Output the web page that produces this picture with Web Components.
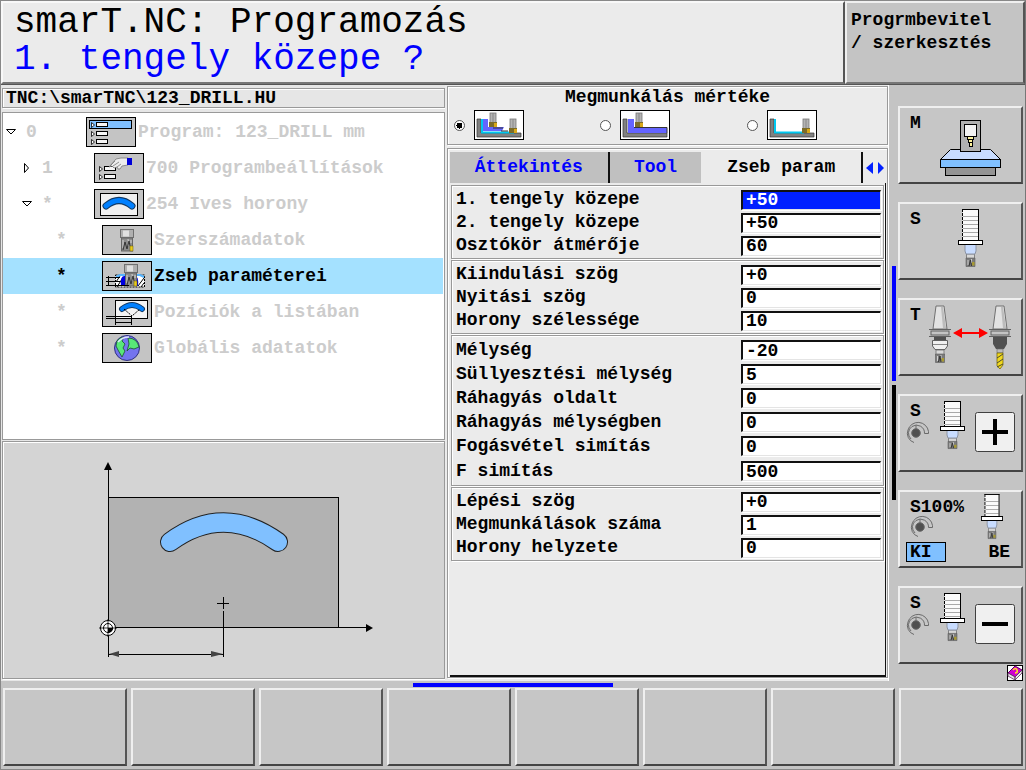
<!DOCTYPE html>
<html lang="hu">
<head>
<meta charset="utf-8">
<meta name="viewport" content="width=device-width, initial-scale=1">
<title>smarT.NC: Programozás</title>
<style>
  html, body { margin: 0; }
  body {
    background: #c4c4c4;
    color: #000;
    font: bold 18px/23px "Liberation Mono", monospace;
  }
</style>
</head>
<body>
<nc-app></nc-app>

<script>
/* Base: every element renders its markup and styles into an open shadow root. */
class NcElement extends HTMLElement {
  connectedCallback() {
    if (this.shadowRoot) return;
    const t = document.createElement('template');
    t.innerHTML = '<style>:host,*{box-sizing:border-box}' + this.css() + '</style>' + this.html();
    this.attachShadow({ mode: 'open' }).append(t.content.cloneNode(true));
  }
  css() { return ''; }
  html() { return '<slot></slot>'; }
  at(name) { return this.getAttribute(name) || ''; }
}

/* ---------- shared drawings ---------- */
const cutter = (x, y, w, h) => `<g transform="translate(${x} ${y}) scale(${w / 8} ${h / 13})">
  <rect x="0" y="0" width="8" height="5" fill="#d8d8d8" stroke="#707070" stroke-width=".8"/>
  <path d="M-.5 4H8.5V12.5H-.5Z" fill="#7c7c7c" stroke="#5a5a5a" stroke-width=".6"/>
  <path d="M1.5 6V11M5 5V9" stroke="#d0d0d0"/><path d="M2.5 12L4 6L5 12" stroke="#333" fill="none"/><rect x="5.6" y="8" width="2.4" height="3.5" fill="#a89a30"/></g>`;

const spindle = (x, y, w, body) => {
  const k = w / 25;
  let lines = '';
  for (let i = 7; i < body - 1; i += 4) lines += `<path d="M5 ${i + .5}H20" stroke="#a8a8a8"/>`;
  const t = body + 4, th = body > 28 ? 10 : 8, ch = body > 28 ? 13 : 11;
  return `<g transform="translate(${x} ${y}) scale(${k} 1)">
    <rect x="4.5" y=".5" width="16" height="${body}" fill="#fafafa"/>${lines}
    <path d="M4 .5H21M20.5 0V${body}" stroke="#000" fill="none"/>
    <path d="M4.5 0V${body}" stroke="#000" stroke-dasharray="3 1"/>
    ${cutter(8.5, t + th, 8, ch)}
    <path d="M7 ${t}H18V${t + th - 3}L17 ${t + th}H8L7 ${t + th - 3}Z" fill="#c8dcff" stroke="#8c94a4"/>
    <rect x=".5" y="${body + .5}" width="24" height="4" fill="#fff" stroke="#000"/></g>`;
};

const knob = (x, y) => `<g transform="translate(${x} ${y})" fill="none" stroke="#6a6a6a">
  <path d="M2 9A10.5 10.5 0 0 1 22.500 10.500V12.500H18.500A8 8 0 0 0 6 5.500"/>
  <path d="M2 9A9.500 9.500 0 0 0 8 21.500M6 5.500A8 8 0 0 0 5 18"/>
  <circle cx="10" cy="12" r="4.300" fill="#505050"/><path d="M10 4V8"/></g>`;

const padKey = (x, y, plus) => `<rect x="${x + .5}" y="${y + .5}" width="39" height="39" rx="2" fill="#f0f0f0" stroke="#404040"/>
  <path d="M${x + 7} ${y + 20}H${x + 33}${plus ? `M${x + 20} ${y + 7}V${y + 33}` : ''}" stroke="#000" stroke-width="4"/>`;

const holder = (x, y, dark) => `<g transform="translate(${x} ${y})">
  <path d="M7 0H15L18 23H4Z" fill="#e2e2e2" stroke="#707070"/>
  <path d="M12 1L14 22H17L14 1Z" fill="#bcbcbc"/>
  <path d="M0 23.5H22M0 30.5H22" stroke="#606060"/><rect x="2" y="25" width="18" height="4" fill="#c4c4c4" stroke="#606060"/>
  ${dark ? `<path d="M4 31H18V38L15 43H7L4 38Z" fill="#505050"/><rect x="8" y="43" width="6" height="4" fill="#bbb" stroke="#666" stroke-width=".6"/>
    <path d="M8 47H14V59L11 63L8 60Z" fill="#f0d820" stroke="#6b5b00" stroke-width=".7"/><path d="M8 52L14 48M8 57L14 53M8 61L14 58" stroke="#4a4a30"/>`
  : `<rect x="5" y="31" width="12" height="3" fill="#505050"/><path d="M3.5 34.5H18.5V40L16 43.5H6L3.5 40Z" fill="#f0f0f0" stroke="#606060"/><path d="M4 38.5H18" stroke="#888"/>
    ${cutter(7, 44, 8, 13)}`}</g>`;

/* Softkey pictures, drawn on a 120 x 74 field. */
const KEY_ART = {
  machine: `<g stroke="#000"><rect x="45.5" y="59.5" width="50" height="8" fill="#949494"/>
    <path d="M40.5 51.5L50.5 41.5H90.5L100.5 51.5Z" fill="#c8dcff"/>
    <rect x="40.5" y="51.5" width="60" height="8" fill="#80c0ff"/>
    <rect x="60.5" y="12.5" width="20" height="31" fill="#b0b0b0"/>
    <rect x="64.5" y="16.5" width="12" height="12" fill="#f2f2f2"/>
    <rect x="67.5" y="28.5" width="6" height="3" fill="#fff49c"/><rect x="68.5" y="31.5" width="4" height="3" fill="#fff49c"/><rect x="69.5" y="34.5" width="3" height="4" fill="#fff49c"/></g>`,
  spindle: spindle(58, 5, 25, 31),
  tool: holder(29, 6, false) + holder(89, 6, true) +
    '<path d="M60 33H82" stroke="#f00" stroke-width="2"/><path d="M53 33L62 28V38ZM88 33L79 28V38Z" fill="#f00"/>',
  plus: knob(6, 25) + spindle(40, 5, 25, 25) + padKey(75, 16, true),
  override: knob(10, 23) + spindle(81, 2, 22, 22),
  minus: knob(6, 25) + spindle(40, 5, 25, 25) + padKey(75, 16, false)
};

/* Tree pictures, 50 x 30. */
const entry = (x, y) => `<path d="M${x + .5} ${y + .5}V${y + 5.5}L${x + 3.5} ${y + 3}Z" fill="#fff" stroke="#000" stroke-width=".8"/>
  <rect x="${x + 5.5}" y="${y + .5}" width="11" height="4" fill="#f6f6f6" stroke="#000"/>`;
const head = (x, y) => `<g transform="translate(${x} ${y})">
  <rect x=".5" y=".5" width="13" height="8" fill="#b0b0b0" stroke="#707070"/><path d="M3 1.500H9V7.500H3Z" fill="#e0e0e0"/>
  <rect x="1.500" y="9" width="11" height="13" fill="#8c8c8c" stroke="#666"/>
  <path d="M3 11V19M8 10L9 17M11 11V14" stroke="#d6d6d6"/><path d="M3 21L5 13L7 20L9 12L10 17" stroke="#333" fill="none"/>
  <rect x="10" y="17" width="3" height="5" fill="#e8cc20" stroke="#6b5b00" stroke-width=".5"/></g>`;
const TREE_ART = {
  program: `<rect x="3.5" y="3.5" width="42" height="8" fill="#80c0ff" stroke="#000"/>${entry(5, 5)}${entry(5, 14)}${entry(5, 22)}`,
  settings: `${entry(5, 13)}${entry(5, 21)}
    <path d="M15 14L22 6L27 5L34 5V12L28 13L26 16H24L23 14L20 15L18 13Z" fill="#ececec" stroke="#7a7a7a" stroke-width=".8"/>
    <path d="M15 14L21 8M19 13L25 9M23 14L27 11" stroke="#777" stroke-width=".8"/><rect x="33" y="5" width="5" height="7" fill="#0000d8"/>`,
  slot: `<rect x="6.5" y="4.5" width="37" height="22" fill="#f0f0f0" stroke="#000"/>
    <path d="M12 17Q25 6 38 17" fill="none" stroke="#123a66" stroke-width="7" stroke-linecap="round"/>
    <path d="M12 17Q25 6 38 17" fill="none" stroke="#0080ff" stroke-width="5" stroke-linecap="round"/>`,
  tool: head(18, 4),
  pocket: `<rect x="13.5" y="14" width="29" height="12" fill="#fff" stroke="#000" stroke-dasharray="2 1"/>
    <path d="M14 21L18 15M15 26L20 18M36 25L42 17M39 26L42 22" stroke="#000"/>
    <path d="M14 16L18 14H38L42 16" stroke="#55b4ff" stroke-width="2" fill="none"/>
    <path d="M22 15Q18 15 19 25H36Q37 15 33 15Z" fill="#0000e0"/>${head(22, 3)}
    <path d="M4 16.5H18M4 20.5H18M4 24.5H27M6.5 15V25" stroke="#000" fill="none"/>`,
  positions: `<rect x="13.5" y="3.5" width="32" height="18" fill="#f4f4f4" stroke="#000"/>
    <path d="M20 12Q30 4 40 12" fill="none" stroke="#123a66" stroke-width="6" stroke-linecap="round"/>
    <path d="M20 12Q30 4 40 12" fill="none" stroke="#0080ff" stroke-width="4" stroke-linecap="round"/>
    <path d="M22 12L30 19L38 12" fill="none" stroke="#000" stroke-dasharray="2 1"/>
    <path d="M4 19.5H30M4 21.5H14M13.5 21V28M29.5 19V28M14 25.5H29" stroke="#000" fill="none"/>`,
  globe: `<circle cx="25" cy="15" r="12.5" fill="#7474ee" stroke="#303080"/>
    <path d="M15 8Q18 4 22 4L20 8L23 11L21 15L23 18L20 24L16 17L14 13Z" fill="#58e878" stroke="#1c4c30" stroke-width=".8"/>
    <path d="M26 5Q35 5 37 14L32 16L28 15L25 18L27 11Z" fill="#58e878" stroke="#1c4c30" stroke-width=".8"/>
    <path d="M16 9Q20 4 27 4" fill="none" stroke="#dfe4ff" stroke-width="1.5"/>`
};

/* Machining scope pictures, 50 x 30. */
const smallMill = (x, y) => `<rect x="${x}" y="${y}" width="6" height="11" fill="#b4b4b4" stroke="#777" stroke-width=".8"/><path d="M${x + 3} ${y}V${y + 9}" stroke="#888"/>
  <rect x="${x - 1}" y="${y + 9}" width="8" height="5" fill="#7c6c28"/><rect x="${x + 4}" y="${y + 10}" width="3" height="4" fill="#d8a818"/>`;
const frame = '<path d="M3 9H7V23H47V27H3Z" fill="#808080" stroke="#333" stroke-width=".7"/>';
const SCOPE_ART = {
  both: `${frame}<path d="M8 9V22.5H40" fill="none" stroke="#00c8f0" stroke-width="2"/>
    <path d="M9 9H14V17H30L28 21H9Z" fill="#6464ff"/><path d="M19 18H29M27 21H34" stroke="#333"/>${smallMill(16, 3)}${smallMill(36, 9)}`,
  rough: `${frame}<path d="M8 9H14V18H47V23H8Z" fill="#6464ff"/><path d="M14 17.5H47V23" fill="none" stroke="#333"/>${smallMill(16, 3)}`,
  finish: `${frame}<path d="M8 9V22.5H37" fill="none" stroke="#00c8f0" stroke-width="2"/>${smallMill(36, 9)}`
};

/* ---------- header ---------- */
customElements.define('nc-header', class extends NcElement {
  css() { return `
    :host { display: grid; grid-template-columns: minmax(0, 1fr) 180px; background: #555; border-bottom: 1px solid #555; }
    header { background: #ebebeb; border: 2px solid; border-color: #f8f8f8 #555 #777 #f8f8f8; padding: 1px 10px 4px 11px; font-weight: normal; font-size: 36px; line-height: 37px; }
    h1, p { font: inherit; margin: 0; white-space: nowrap; }
    .prompt { color: #0000ff; }
    aside { background: #c4c4c4; border: 2px solid; border-color: #efefef #555 #777 #efefef; padding: 6px 4px; }`; }
  html() { return `<header><h1>${this.at('heading')}</h1><p class="prompt">${this.at('prompt')}</p></header><aside><slot></slot></aside>`; }
});

/* ---------- program tree ---------- */
customElements.define('nc-tree-item', class extends NcElement {
  css() { return `
    :host { display: grid; grid-template-columns: 83px 50px minmax(0, 1fr); align-items: center; height: 36px; color: #cccccc; }
    :host([level="1"]) { grid-template-columns: 91px 50px minmax(0, 1fr); --in: 19px; }
    :host([level="2"]) { grid-template-columns: 99px 50px minmax(0, 1fr); --in: 33px; }
    :host([selected]) { background: #a4e1ff; color: #000; }
    .lead { display: flex; align-items: center; padding-left: var(--in, 3px); }
    .tw { flex: 0 0 20px; height: 10px; }
    .pic { background: #c4c4c4; border: 1px solid #000; width: 50px; height: 30px; }
    .name { padding-left: 2px; white-space: nowrap; }`; }
  html() {
    const tw = { open: '<path d="M.5 2.5H9.5L5 7Z" fill="#fff" stroke="#000"/>', closed: '<path d="M2.5 .5V9.5L6.5 5Z" fill="#fff" stroke="#000"/>' }[this.at('state')] || '';
    return `<span class="lead"><svg class="tw" width="20" height="10">${tw}</svg><span>${this.at('mark')}</span></span>
      <svg class="pic" viewBox="1 1 48 28">${TREE_ART[this.at('art')]}</svg><span class="name"><slot></slot></span>`;
  }
});
customElements.define('nc-tree', class extends NcElement {
  css() { return `
    :host { display: flex; flex-direction: column; gap: 4px; }
    h2 { font: inherit; line-height: 19px; height: 20px; margin: 0; padding-left: 3px; border: 1px solid #999; box-shadow: 1px 1px #fff, inset 1px 1px #fff; white-space: nowrap; }
    .list { flex: 1; background: #fff; border: 1px solid #999; padding: 1px 1px 0 0; }`; }
  html() { return `<h2>${this.at('path')}</h2><div class="list"><slot></slot></div>`; }
});

/* ---------- help graphic ---------- */
customElements.define('nc-graphic', class extends NcElement {
  css() { return `:host { display: block; background: #d4d4d4; border: 1px solid #999; box-shadow: inset 1px 1px #fff, 1px 1px #fff; } svg { display: block; width: 100%; height: 236px; }`; }
  html() { return `<svg viewBox="3 443 441 236" preserveAspectRatio="xMinYMin" fill="none" stroke="#000" role="img" aria-label="1. tengely közepe">
    <rect x="108.5" y="498.5" width="230" height="130" fill="#b2b2b2"/>
    <path d="M108.5 658V468M108 628.5H368M223.5 658V612M217 604.5H229M223.5 598V610M109 655.5H223"/>
    <path d="M108 463L112 471H104ZM373 629L366 625V633Z" fill="#000" stroke="none"/>
    <path d="M109 655L119 652V658ZM223 655L211 652V658Z" fill="#444" stroke="none"/>
    <path d="M170 543Q223 504 278 543" stroke="#222" stroke-width="20" stroke-linecap="round"/>
    <path d="M170 543Q223 504 278 543" stroke="#80c0ff" stroke-width="18" stroke-linecap="round"/>
    <circle cx="108" cy="629" r="7.5" fill="#fff"/><circle cx="108" cy="629" r="4.5"/><path d="M99 629H117M108 620V638" stroke-width=".8"/>
    <path d="M108 629H113A5 5 0 0 1 108 634Z" fill="#000" stroke="none"/></svg>`; }
});

/* ---------- machining scope ---------- */
customElements.define('nc-scope', class extends NcElement {
  css() { return `
    :host { display: block; height: 59px; border: 1px solid #999; box-shadow: inset 1px 1px #fff, 1px 1px #fff; }
    fieldset { margin: 0; padding: 0; border: 0; }
    legend { float: left; width: 100%; padding: 0 0 3px; text-align: center; line-height: 20px; }
    .row { clear: both; display: grid; grid-template-columns: repeat(3, 1fr); }
    label { display: flex; align-items: center; gap: 9px; padding-left: 6px; }
    input { appearance: none; width: 11px; height: 11px; margin: 0; border: 1px solid #555; border-radius: 50%; background: #fff; }
    input:checked { background: radial-gradient(#000 0 3px, #fff 3px); }
    svg { width: 50px; height: 30px; border: 1px solid #000; background: #fff; }`; }
  html() {
    const opt = (id, name, on) => `<label for="${id}"><input type="radio" name="scope" id="${id}" aria-label="${name}" ${on ? 'checked' : ''}><svg viewBox="1 1 48 28">${SCOPE_ART[id]}</svg></label>`;
    return `<fieldset><legend>Megmunkálás mértéke</legend><div class="row">${opt('both', 'Nagyolás és simítás', true)}${opt('rough', 'Nagyolás')}${opt('finish', 'Simítás')}</div></fieldset>`;
  }
});

/* ---------- form ---------- */
customElements.define('nc-field', class extends NcElement {
  css() { return `
    :host { display: grid; grid-template-columns: minmax(0, 1fr) 140px; align-items: center; height: var(--row, 23px); }
    :host([last]) { height: 26px; }
    label { white-space: nowrap; }
    input { width: 100%; height: 20px; margin: 0; padding: 0 2px 0 3px; border: 2px solid; border-width: 2px 1px 1px 2px; border-color: #111 #e4e4e4 #e4e4e4 #111; border-radius: 0; background: #fff; color: #000; font: inherit; line-height: 17px; box-shadow: 1px 1px #fff; outline: 0; }
    :host([active]) input { background: #0020ff; color: #fff; }`; }
  html() { return `<label for="v">${this.at('label')}</label><input id="v" type="text" value="${this.at('value')}">`; }
});
customElements.define('nc-group', class extends NcElement {
  css() { return `
    :host { display: block; border: 1px solid #999; box-shadow: inset 1px 1px #fff, 1px 1px #fff; padding: 2px 2px 1px 4px; }
    :host([roomy]) { --row: 24px; }`; }
});
customElements.define('nc-tabs', class extends NcElement {
  css() { return `
    :host { display: flex; flex-direction: column; border: 1px solid #999; box-shadow: inset 1px 1px #fff, 1px 1px #fff; background: #ebebeb; padding: 3px 1px 0 2px; }
    .tabs { display: grid; grid-template-columns: 160fr 92fr 162fr 23px; height: 31px; }
    button { font: inherit; border: 0; padding: 0; margin: 0; background: #c0c0c0; color: #0000ff; }
    .tabs > :first-child { border-right: 2px solid #111; }
    .tabs > .on { background: none; color: #000; border-right: 2px solid #111; }
    .nav { display: flex; align-items: center; justify-content: center; }
    .nav button { background: none; display: flex; width: 10px; }
    .body { flex: 1; display: flex; flex-direction: column; gap: 1px; padding: 2px 1px 0 1px; border: solid #111; border-width: 0 1px 2px 0; }`; }
  html() { return `<div class="tabs" role="tablist"><button role="tab">Áttekintés</button><button role="tab">Tool</button><button role="tab" class="on" aria-selected="true">Zseb param</button>
    <div class="nav"><button aria-label="Előző"><svg width="10" height="12"><path d="M8 0V12L1 6Z" fill="#0020ff"/></svg></button><button aria-label="Következő"><svg width="10" height="12"><path d="M3 0V12L9 6Z" fill="#0020ff"/></svg></button></div></div>
    <div class="body"><slot></slot></div>`; }
});

/* ---------- softkeys ---------- */
customElements.define('nc-softkey', class extends NcElement {
  css() { return `
    :host { display: block; height: 78px; }
    button { display: grid; grid-template: 74px / minmax(0, 1fr); width: 100%; height: 100%; margin: 0; padding: 0; border: 2px solid; border-color: #efefef #555 #444 #efefef; border-radius: 0; background: #c6c6c6; color: #000; font: inherit; text-align: left; }
    button > * { grid-area: 1 / 1; }
    .label { padding: 4px 0 0 10px; }
    .foot { align-self: end; display: flex; justify-content: space-between; align-items: center; padding: 0 11px 4px 6px; line-height: 18px; }
    .state { width: 40px; border: 1px solid #000; background: #80c0ff; padding-left: 3px; }`; }
  html() {
    const art = this.at('art'), foot = this.at('on');
    return `<button aria-label="${this.at('label') || 'Softkey'}">${art ? `<svg width="120" height="74" viewBox="0 0 120 74" fill="none">${KEY_ART[art]}</svg>` : ''}
      ${this.at('label') ? `<span class="label">${this.at('label')}</span>` : ''}
      ${foot ? `<span class="foot"><span class="state">${foot}</span><span>${this.at('off')}</span></span>` : ''}</button>`;
  }
});
customElements.define('nc-side-keys', class extends NcElement {
  css() { return `
    :host { display: grid; grid-template-columns: 9px minmax(0, 1fr); padding-right: 2px; }
    .bars { display: flex; flex-direction: column; gap: 4px; padding: 181px 2px 0 3px; }
    .bars i { height: 115px; background: #000; } .bars i:first-child { background: #0000ff; }
    .keys { display: flex; flex-direction: column; gap: 18px; padding-top: 21px; }
    .help { align-self: flex-end; display: block; width: 16px; height: 16px; margin-top: -17px; }
    svg { display: block; }`; }
  html() { return `<div class="bars"><i></i><i></i></div><div class="keys"><slot></slot>
    <a class="help" href="#help" aria-label="Súgó"><svg width="16" height="16"><rect x=".5" y=".5" width="15" height="15" fill="#fff" stroke="#000"/>
    <path d="M1 8L8 1L15 5L8 12Z" fill="#d000d0" stroke="#600060"/><path d="M1 8L8 12V15L1 11ZM8 12L15 5V8L8 15Z" fill="#e8e8e8" stroke="#603060" stroke-width=".8"/><path d="M6 5Q9 2 10 5T8 8" fill="none" stroke="#ffe020" stroke-width="1.6"/></svg></a></div>`; }
});
customElements.define('nc-bottom-keys', class extends NcElement {
  css() { return `
    :host { display: block; padding: 2px 2px 3px; }
    .bar { width: 200px; height: 4px; margin: 0 auto 1px; background: #0000ff; }
    .keys { display: grid; grid-template-columns: repeat(8, minmax(0, 1fr)); gap: 4px; }`; }
  html() { return `<div class="bar"></div><div class="keys"><slot></slot></div>`; }
});

/* ---------- screen ---------- */
customElements.define('nc-app', class extends NcElement {
  css() { return `
    :host { display: grid; grid-template-rows: auto 1fr auto; min-height: 100vh; border: 1px solid #888; border-right-color: #777; }
    main { display: grid; grid-template-columns: minmax(0, 1fr) minmax(0, 1fr) 136px; }
    .left { display: flex; flex-direction: column; gap: 1px; padding: 3px 0 2px 1px; background: #e6e6e6; }
    nc-tree { flex: 1; }
    .form { display: flex; flex-direction: column; gap: 3px; padding: 1px 0 3px 2px; background: #ebebeb; border-right: 1px solid #fff; }
    nc-tabs { flex: 1; }`; }
  html() { return `
    <nc-header heading="smarT.NC: Programozás" prompt="1. tengely közepe ?">Progrmbevitel<br>/ szerkesztés</nc-header>
    <main>
      <section class="left">
        <nc-tree path="TNC:\\smarTNC\\123_DRILL.HU">
          <nc-tree-item level="0" state="open" mark="0" art="program">Program: 123_DRILL mm</nc-tree-item>
          <nc-tree-item level="1" state="closed" mark="1" art="settings">700 Programbeállítások</nc-tree-item>
          <nc-tree-item level="1" state="open" mark="*" art="slot">254 Ives horony</nc-tree-item>
          <nc-tree-item level="2" mark="*" art="tool">Szerszámadatok</nc-tree-item>
          <nc-tree-item level="2" mark="*" art="pocket" selected>Zseb paraméterei</nc-tree-item>
          <nc-tree-item level="2" mark="*" art="positions">Pozíciók a listában</nc-tree-item>
          <nc-tree-item level="2" mark="*" art="globe">Globális adatatok</nc-tree-item>
        </nc-tree>
        <nc-graphic></nc-graphic>
      </section>
      <section class="form">
        <nc-scope></nc-scope>
        <nc-tabs>
          <nc-group>
            <nc-field label="1. tengely közepe" value="+50" active></nc-field>
            <nc-field label="2. tengely közepe" value="+50"></nc-field>
            <nc-field label="Osztókör átmérője" value="60"></nc-field>
          </nc-group>
          <nc-group>
            <nc-field label="Kiindulási szög" value="+0"></nc-field>
            <nc-field label="Nyitási szög" value="0"></nc-field>
            <nc-field label="Horony szélessége" value="10"></nc-field>
          </nc-group>
          <nc-group roomy>
            <nc-field label="Mélység" value="-20"></nc-field>
            <nc-field label="Süllyesztési mélység" value="5"></nc-field>
            <nc-field label="Ráhagyás oldalt" value="0"></nc-field>
            <nc-field label="Ráhagyás mélységben" value="0"></nc-field>
            <nc-field label="Fogásvétel simítás" value="0"></nc-field>
            <nc-field label="F simítás" value="500" last></nc-field>
          </nc-group>
          <nc-group>
            <nc-field label="Lépési szög" value="+0"></nc-field>
            <nc-field label="Megmunkálások száma" value="1"></nc-field>
            <nc-field label="Horony helyzete" value="0"></nc-field>
          </nc-group>
        </nc-tabs>
      </section>
      <nc-side-keys>
        <nc-softkey label="M" art="machine"></nc-softkey>
        <nc-softkey label="S" art="spindle"></nc-softkey>
        <nc-softkey label="T" art="tool"></nc-softkey>
        <nc-softkey label="S" art="plus"></nc-softkey>
        <nc-softkey label="S100%" art="override" on="KI" off="BE"></nc-softkey>
        <nc-softkey label="S" art="minus"></nc-softkey>
      </nc-side-keys>
    </main>
    <nc-bottom-keys>${'<nc-softkey></nc-softkey>'.repeat(8)}</nc-bottom-keys>`; }
});
</script>
</body>
</html>
